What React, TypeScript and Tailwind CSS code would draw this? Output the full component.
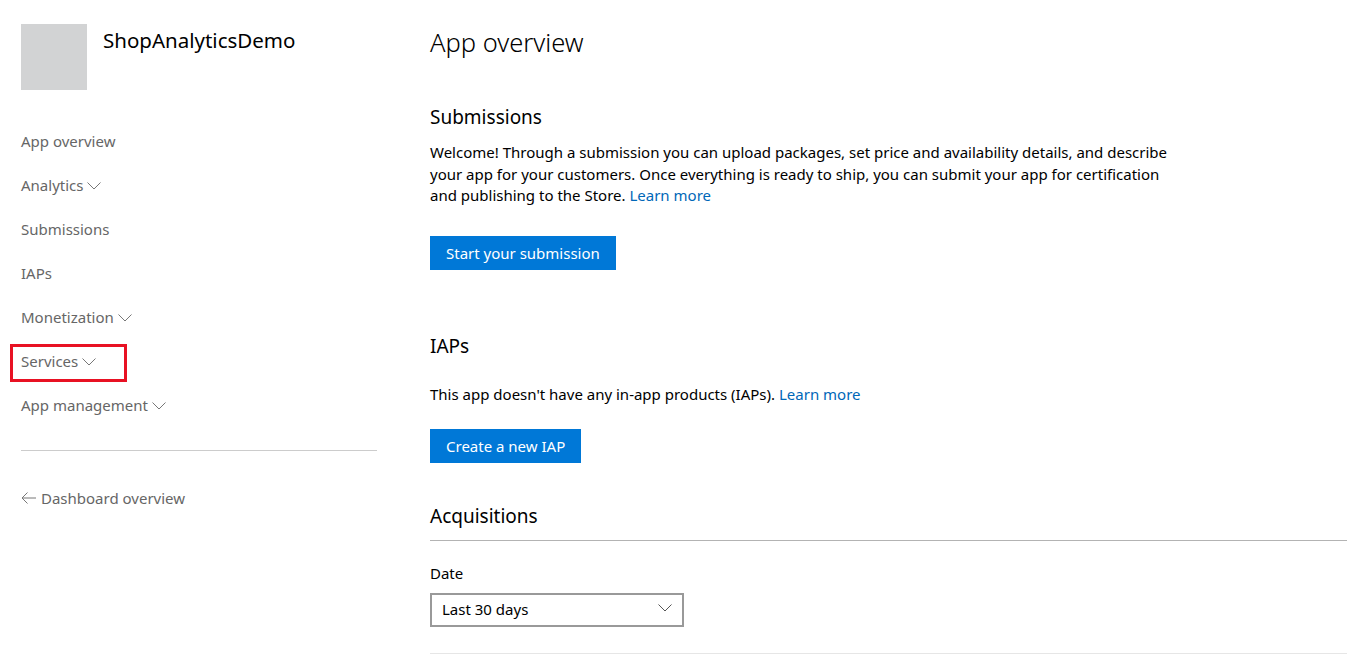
import React from "react";

const Chevron = ({ className = "" }: { className?: string }) => (
  <svg className={className} width="14" height="8" viewBox="0 0 14 8" fill="none">
    <path d="M0.5 0.5 L7 7 L13.5 0.5" stroke="currentColor" strokeWidth="1" />
  </svg>
);

const navItems = [
  { label: "App overview", chevron: false },
  { label: "Analytics", chevron: true },
  { label: "Submissions", chevron: false },
  { label: "IAPs", chevron: false },
  { label: "Monetization", chevron: true },
  { label: "Services", chevron: true, highlight: true },
  { label: "App management", chevron: true },
];

const Sidebar = () => (
  <aside className="w-[377px] shrink-0 pl-[21px] pt-[24px]">
    <div className="flex">
      <div className="w-[66px] h-[66px] bg-[#d2d3d4]" />
      <div className="ml-[16px] mt-[2px] text-[20.5px] leading-[28px] text-black">ShopAnalyticsDemo</div>
    </div>
    <nav className="mt-[29px] flex flex-col">
      {navItems.map((item) => (
        <div key={item.label} className="relative h-[44px] flex items-center text-[15px] text-[#666666]">
          {item.highlight && (
            <div className="absolute left-[-11px] top-[5px] w-[117px] h-[38px] border-[3px] border-[#e81123]" />
          )}
          <span>{item.label}</span>
          {item.chevron && <Chevron className="ml-[4px] mt-[2px] text-[#777777]" />}
        </div>
      ))}
    </nav>
    <div className="mt-[23px] h-px bg-[#cccccc]" />
    <div className="mt-[36px] flex items-center text-[15px] text-[#666666]">
      <svg width="16" height="12" viewBox="0 0 16 12" fill="none" className="mr-[4px]">
        <path d="M15 6 H1 M6.5 0.5 L1 6 L6.5 11.5" stroke="#777777" strokeWidth="1" />
      </svg>
      <span>Dashboard overview</span>
    </div>
  </aside>
);

const Button = ({ children }: { children: React.ReactNode }) => (
  <button className="h-[34px] px-[16px] bg-[#0078d7] text-white text-[15px] leading-[34px]">{children}</button>
);

const Main = () => (
  <main className="flex-1 pl-[53px] pt-[25px] text-black">
    <h1 className="text-[25.5px] leading-[34px] font-light">App overview</h1>
    <h2 className="mt-[44px] text-[19px] leading-[28px]">Submissions</h2>
    <p className="mt-[11px] max-w-[758px] text-[15px] leading-[21.5px]">
      Welcome! Through a submission you can upload packages, set price and availability details, and describe
      your app for your customers. Once everything is ready to ship, you can submit your app for certification
      and publishing to the Store. <span className="text-[#0067b8]">Learn more</span>
    </p>
    <div className="mt-[29px]">
      <Button>Start your submission</Button>
    </div>
    <h2 className="mt-[62px] text-[19px] leading-[28px]">IAPs</h2>
    <p className="mt-[24px] text-[15px] leading-[21px]">
      This app doesn't have any in-app products (IAPs). <span className="text-[#0067b8]">Learn more</span>
    </p>
    <div className="mt-[24px]">
      <Button>Create a new IAP</Button>
    </div>
    <h2 className="mt-[39px] text-[19px] leading-[28px]">Acquisitions</h2>
    <div className="mt-[10px] h-px bg-[#b3b3b3]" />
    <div className="mt-[22px] text-[15px] leading-[21px]">Date</div>
    <div className="mt-[9px] w-[254px] h-[34px] border-2 border-[#999999] flex items-center justify-between pl-[10px] pr-[10px] text-[15px]">
      <span>Last 30 days</span>
      <Chevron className="text-[#555555] -mt-[4px]" />
    </div>
    <div className="mt-[26px] h-px bg-[#e6e6e6]" />
  </main>
);

export default function App() {
  return (
    <div className="w-[1347px] h-[670px] overflow-hidden bg-white flex" style={{ fontFamily: '"Noto Sans", "Open Sans", sans-serif' }}>
      <Sidebar />
      <Main />
    </div>
  );
}
